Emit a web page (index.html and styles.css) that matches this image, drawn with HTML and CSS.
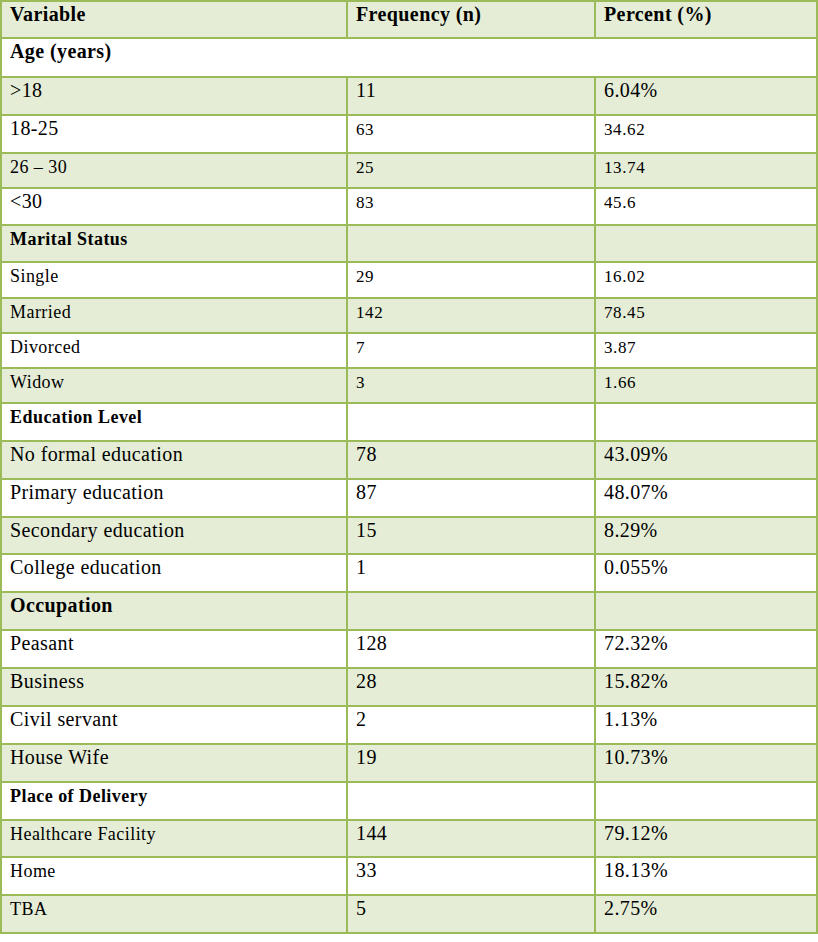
FILE: index.html
```html
<!DOCTYPE html>
<html lang="en">
<head>
<meta charset="utf-8">
<title>Socio-demographic characteristics</title>
<link rel="stylesheet" href="styles.css">
</head>
<body>
<table class="data">
  <thead>
    <tr class="hh">
      <th class="c1 lg">Variable</th>
      <th class="c2 lg">Frequency (n)</th>
      <th class="c3 lg">Percent (%)</th>
    </tr>
  </thead>
  <tbody>
    <tr class="h39"><td colspan="3" class="lg b">Age (years)</td></tr>
    <tr class="h38"><td class="lg">&gt;18</td><td class="lg">11</td><td class="lg">6.04%</td></tr>
    <tr class="h38"><td class="lg">18-25</td><td class="sm">63</td><td class="sm">34.62</td></tr>
    <tr class="h35"><td class="md">26 – 30</td><td class="sm">25</td><td class="sm">13.74</td></tr>
    <tr class="h37"><td class="lg">&lt;30</td><td class="sm">83</td><td class="sm">45.6</td></tr>
    <tr class="h37"><td class="md b">Marital Status</td><td></td><td></td></tr>
    <tr class="h36"><td class="md">Single</td><td class="sm">29</td><td class="sm">16.02</td></tr>
    <tr class="h35"><td class="md">Married</td><td class="sm">142</td><td class="sm">78.45</td></tr>
    <tr class="h35"><td class="md">Divorced</td><td class="sm">7</td><td class="sm">3.87</td></tr>
    <tr class="h35"><td class="md">Widow</td><td class="sm">3</td><td class="sm">1.66</td></tr>
    <tr class="h38"><td class="md b">Education Level</td><td></td><td></td></tr>
    <tr class="h38"><td class="lg">No formal education</td><td class="lg">78</td><td class="lg">43.09%</td></tr>
    <tr class="h38"><td class="lg">Primary education</td><td class="lg">87</td><td class="lg">48.07%</td></tr>
    <tr class="h37"><td class="lg">Secondary education</td><td class="lg">15</td><td class="lg">8.29%</td></tr>
    <tr class="h38"><td class="lg">College education</td><td class="lg">1</td><td class="lg">0.055%</td></tr>
    <tr class="h38"><td class="lg b">Occupation</td><td></td><td></td></tr>
    <tr class="h38"><td class="lg">Peasant</td><td class="lg">128</td><td class="lg">72.32%</td></tr>
    <tr class="h38"><td class="lg">Business</td><td class="lg">28</td><td class="lg">15.82%</td></tr>
    <tr class="h38"><td class="lg">Civil servant</td><td class="lg">2</td><td class="lg">1.13%</td></tr>
    <tr class="h38"><td class="lg">House Wife</td><td class="lg">19</td><td class="lg">10.73%</td></tr>
    <tr class="h38"><td class="md b">Place of Delivery</td><td></td><td></td></tr>
    <tr class="h37"><td class="md">Healthcare Facility</td><td class="lg">144</td><td class="lg">79.12%</td></tr>
    <tr class="h38"><td class="md">Home</td><td class="lg">33</td><td class="lg">18.13%</td></tr>
    <tr class="h38"><td class="md">TBA</td><td class="lg">5</td><td class="lg">2.75%</td></tr>
  </tbody>
</table>
</body>
</html>
```

FILE: styles.css
```css
html, body {
  margin: 0;
  padding: 0;
  background: #ffffff;
}

body {
  font-family: "Liberation Serif", "Times New Roman", serif;
  color: #000000;
}

.data {
  table-layout: fixed;
  width: 818px;
  border-collapse: separate;
  border-spacing: 0;
  border-left: 2px solid #9bbb59;
  border-top: 2px solid #9bbb59;
}

.data th,
.data td {
  box-sizing: border-box;
  border-right: 2px solid #9bbb59;
  border-bottom: 2px solid #9bbb59;
  padding: 1px 6px 0 8px;
  vertical-align: top;
  text-align: left;
  font-weight: normal;
  line-height: 1.15;
  white-space: nowrap;
}

.data thead th {
  background: #e5edd6;
  font-weight: bold;
}

.data tbody tr:nth-child(odd) > td {
  background: #ffffff;
}

.data tbody tr:nth-child(even) > td {
  background: #e5edd6;
}

.c1 { width: 346px; }
.c2 { width: 248px; }
.c3 { width: 222px; }

.data .b { font-weight: bold; }

.data .lg {
  font-size: 20px;
  letter-spacing: 0.4px;
}

.data .md {
  font-size: 18px;
  letter-spacing: 0.45px;
  padding-top: 3px;
}

.data .sm {
  font-size: 17px;
  letter-spacing: 0.6px;
  padding-top: 4px;
}

.data .hh > th { height: 37px; }
.data .h35 > td { height: 35px; }
.data .h36 > td { height: 36px; }
.data .h37 > td { height: 37px; }
.data .h38 > td { height: 38px; }
.data .h39 > td { height: 39px; }
```
